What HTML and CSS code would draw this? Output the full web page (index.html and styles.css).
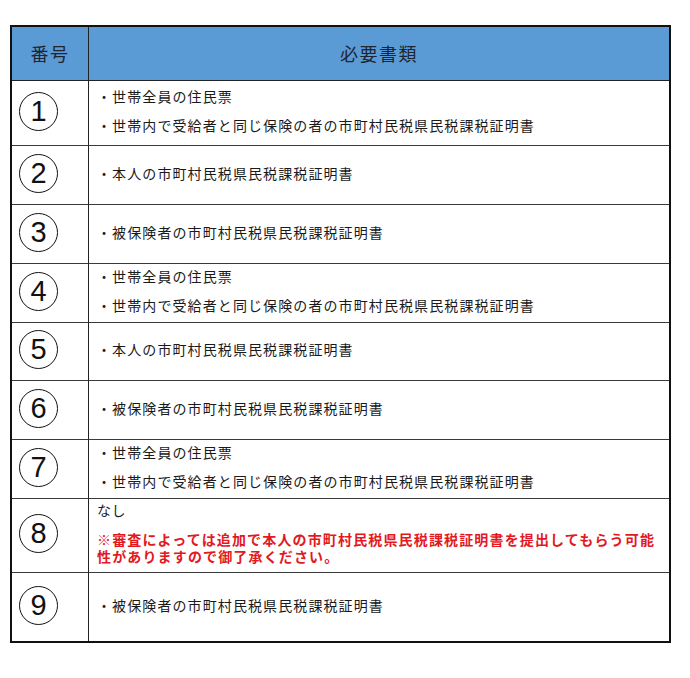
FILE: index.html
```html
<!DOCTYPE html>
<html lang="ja">
<head>
<meta charset="utf-8">
<link rel="stylesheet" href="styles.css">
</head>
<body>
<div class="sheet">
  <div class="cell head no">番号</div>
  <div class="cell head doc">必要書類</div>

  <div class="cell no"><span class="num">1</span></div>
  <div class="cell doc"><p>・世帯全員の住民票</p><p>・世帯内で受給者と同じ保険の者の市町村民税県民税課税証明書</p></div>

  <div class="cell no"><span class="num">2</span></div>
  <div class="cell doc"><p>・本人の市町村民税県民税課税証明書</p></div>

  <div class="cell no"><span class="num">3</span></div>
  <div class="cell doc"><p>・被保険者の市町村民税県民税課税証明書</p></div>

  <div class="cell no"><span class="num">4</span></div>
  <div class="cell doc"><p>・世帯全員の住民票</p><p>・世帯内で受給者と同じ保険の者の市町村民税県民税課税証明書</p></div>

  <div class="cell no"><span class="num">5</span></div>
  <div class="cell doc"><p>・本人の市町村民税県民税課税証明書</p></div>

  <div class="cell no"><span class="num">6</span></div>
  <div class="cell doc"><p>・被保険者の市町村民税県民税課税証明書</p></div>

  <div class="cell no"><span class="num">7</span></div>
  <div class="cell doc"><p>・世帯全員の住民票</p><p>・世帯内で受給者と同じ保険の者の市町村民税県民税課税証明書</p></div>

  <div class="cell no"><span class="num">8</span></div>
  <div class="cell doc"><p class="plain">なし</p><p class="note">※審査によっては追加で本人の市町村民税県民税課税証明書を提出してもらう可能<br>性がありますので御了承ください。</p></div>

  <div class="cell no last"><span class="num">9</span></div>
  <div class="cell doc last"><p>・被保険者の市町村民税県民税課税証明書</p></div>
</div>
</body>
</html>
```
FILE: styles.css
```css
html, body {
  margin: 0;
  padding: 0;
  background: #ffffff;
}

body {
  font-family: "Noto Sans CJK JP", "Noto Sans", sans-serif;
  color: #1a1a1a;
}

.sheet {
  box-sizing: border-box;
  margin: 25px 0 0 10px;
  width: 661px;
  border: 2px solid #111;
  display: grid;
  grid-template-columns: 77px 1fr;
  grid-template-rows: 54px 65px 59px 59px 59px 58px 59px 59px 74px 68px;
}

.cell {
  box-sizing: border-box;
  border-bottom: 1px solid #3a3a3a;
  display: flex;
  flex-direction: column;
  justify-content: center;
  padding-bottom: 4px;
}

.cell.last {
  border-bottom: none;
}

.cell.no {
  border-right: 1px solid #222;
  align-items: flex-start;
  padding-left: 7px;
}

.cell.doc {
  padding-left: 8px;
}

.cell.head {
  background: #5b9bd5;
  color: #1d2630;
  font-size: 18px;
  letter-spacing: 1.5px;
  align-items: center;
  padding-left: 0;
  padding-bottom: 1px;
  border-bottom-color: #222;
}

.num {
  box-sizing: border-box;
  width: 39px;
  height: 39px;
  border: 1.5px solid #111;
  border-radius: 50%;
  display: flex;
  align-items: center;
  justify-content: center;
  font-family: "Liberation Sans", Arial, sans-serif;
  font-size: 29px;
  line-height: 1;
  color: #111;
}

.doc p {
  margin: 0;
  font-size: 14px;
  letter-spacing: 1.1px;
  line-height: 29px;
  white-space: nowrap;
}

.doc p.plain {
  line-height: 17px;
  margin-bottom: 12px;
  letter-spacing: 0.6px;
}

.doc p.note {
  line-height: 17px;
  color: #e3191f;
  font-weight: 700;
  letter-spacing: 1.15px;
}
```
